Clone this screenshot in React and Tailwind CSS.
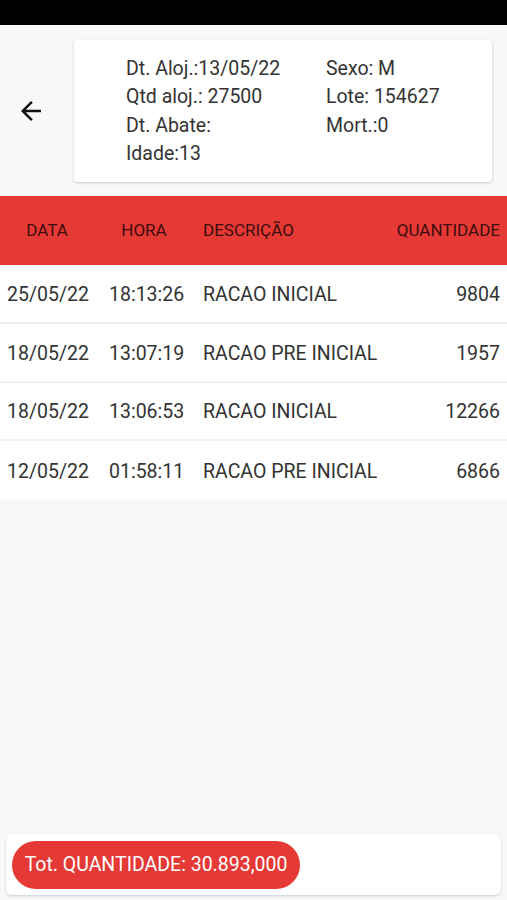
const rows = [
  { data: "25/05/22", hora: "18:13:26", desc: "RACAO INICIAL", qtd: "9804" },
  { data: "18/05/22", hora: "13:07:19", desc: "RACAO PRE INICIAL", qtd: "1957" },
  { data: "18/05/22", hora: "13:06:53", desc: "RACAO INICIAL", qtd: "12266" },
  { data: "12/05/22", hora: "01:58:11", desc: "RACAO PRE INICIAL", qtd: "6866" },
];

function BackArrow() {
  return (
    <svg width="30" height="30" viewBox="0 0 24 24" fill="#111">
      <path d="M20 11H7.83l5.59-5.59L12 4l-8 8 8 8 1.41-1.41L7.83 13H20v-2z" />
    </svg>
  );
}

export default function App() {
  return (
    <div
      className="w-[507px] h-[900px] bg-[#f8f8f8] flex flex-col overflow-hidden"
      style={{ fontFamily: "Roboto, 'Liberation Sans', sans-serif" }}
    >
      <div className="h-[25px] bg-black shrink-0" />

      {/* header info */}
      <div className="flex items-center pt-[15px] pb-[14px]">
        <div className="w-[74px] flex pl-[16px]">
          <BackArrow />
        </div>
        <div className="w-[418px] h-[142px] bg-white rounded-[4px] shadow-[0_1px_3px_rgba(0,0,0,0.18)] pl-[52px] pt-[15px] text-[19.5px] leading-[28.3px] text-[#333]">
          <div className="grid grid-cols-[200px_1fr]">
            <span>Dt. Aloj.:13/05/22</span>
            <span>Sexo: M</span>
            <span>Qtd aloj.: 27500</span>
            <span>Lote: 154627</span>
            <span>Dt. Abate:</span>
            <span>Mort.:0</span>
            <span>Idade:13</span>
          </div>
        </div>
      </div>

      {/* table header */}
      <div className="h-[69px] bg-[#e53935] flex items-center text-[17px] text-[#3d0d0d] shrink-0">
        <span className="w-[96px] text-center pr-[2px]">DATA</span>
        <span className="w-[98px] text-center pr-[2px]">HORA</span>
        <span className="ml-[9px]">DESCRIÇÃO</span>
        <span className="ml-auto pr-[7px]">QUANTIDADE</span>
      </div>

      {/* rows */}
      <div className="bg-white">
        {rows.map((r, i) => (
          <div
            key={i}
            className={`h-[58.8px] pt-[2px] flex items-center text-[19.5px] text-[#333] ${i < rows.length - 1 ? "border-b-2 border-[#efefef]" : ""}`}
          >
            <span className="w-[102px] pl-[7px]">{r.data}</span>
            <span className="w-[94px] pl-[7px]">{r.hora}</span>
            <span className="ml-[7px]">{r.desc}</span>
            <span className="ml-auto pr-[7px]">{r.qtd}</span>
          </div>
        ))}
      </div>

      <div className="flex-1" />

      {/* footer */}
      <div className="mx-[6px] mb-[5px] h-[61px] bg-white rounded-[6px] shadow-[0_1px_3px_rgba(0,0,0,0.18)] flex items-center pl-[6px]">
        <div className="h-[48px] w-[288px] bg-[#e53935] rounded-full flex items-center justify-center text-white text-[19.5px]">
          Tot. QUANTIDADE: 30.893,000
        </div>
      </div>
    </div>
  );
}
